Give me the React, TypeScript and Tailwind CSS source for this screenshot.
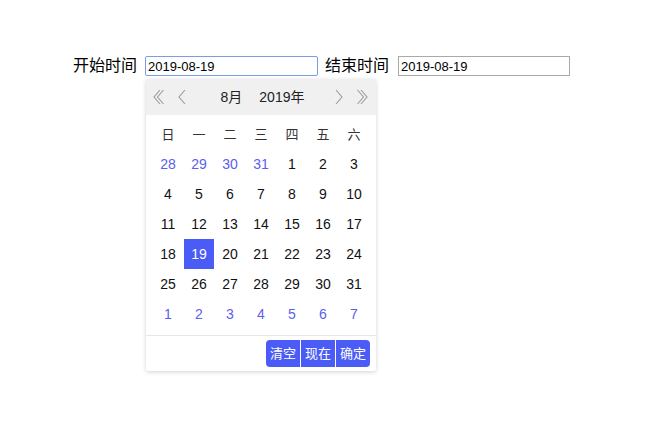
const weeks = ["日", "一", "二", "三", "四", "五", "六"];

type Day = { n: number; other?: boolean; sel?: boolean };

const days: Day[] = [
  ...[28, 29, 30, 31].map((n) => ({ n, other: true })),
  ...Array.from({ length: 31 }, (_, i) => ({ n: i + 1, sel: i + 1 === 19 })),
  ...[1, 2, 3, 4, 5, 6, 7].map((n) => ({ n, other: true })),
];

function Chevron({ double, right }: { double?: boolean; right?: boolean }) {
  const w = double ? 11 : 8;
  return (
    <svg width={w} height="16" viewBox={`0 0 ${w} 16`} className={right ? "-scale-x-100" : ""}>
      <polyline points="7,1 1,8 7,15" fill="none" stroke="#9a9a9a" strokeWidth="1.1" />
      {double && <polyline points="10.5,1 4.5,8 10.5,15" fill="none" stroke="#9a9a9a" strokeWidth="1.1" />}
    </svg>
  );
}

export default function App() {
  return (
    <div
      className="w-[650px] h-[424px] bg-white text-black"
      style={{ fontFamily: '"Liberation Sans", "Noto Sans CJK SC", sans-serif' }}
    >
      <div className="flex items-center pt-[56px] pl-[73px]">
        <span className="text-[16px] leading-[20px]">开始时间</span>
        <input
          readOnly
          value="2019-08-19"
          className="ml-[8px] w-[173px] h-[20px] border border-[#7a9ee6] rounded-[2px] px-[2px] text-[13px] outline-none"
        />
        <span className="ml-[7px] text-[16px] leading-[20px]">结束时间</span>
        <input
          readOnly
          value="2019-08-19"
          className="ml-[9px] w-[172px] h-[20px] border border-[#a9a9a9] px-[2px] text-[13px] outline-none"
        />
      </div>

      <div className="ml-[146px] mt-[3px] w-[230px] bg-white rounded-[2px] shadow-[0_1px_4px_rgba(0,0,0,0.18)] text-[14px]">
        <div className="flex items-center h-[36px] bg-[#f0f0f0] pl-[7px] pr-[8px]">
          <Chevron double />
          <span className="ml-[14px] flex">
            <Chevron />
          </span>
          <div className="flex-1 flex justify-center gap-[17px] text-[#222] pl-[4px]">
            <span>8月</span>
            <span>2019年</span>
          </div>
          <Chevron right />
          <span className="ml-[14px] flex">
            <Chevron double right />
          </span>
        </div>

        <div className="px-[6.5px] pt-[6px] pb-[6px]">
          <div className="grid grid-cols-7">
            {weeks.map((w) => (
              <div key={w} className="h-[28px] flex items-center justify-center text-[13px] text-[#333]">
                {w}
              </div>
            ))}
          </div>
          <div className="grid grid-cols-7">
            {days.map((d, i) => (
              <div key={i} className="h-[30px] flex items-center justify-center">
                <span
                  className={
                    d.sel
                      ? "w-[30px] h-[30px] flex items-center justify-center bg-[#4a5cf5] text-white"
                      : d.other
                      ? "text-[#5b5ef2]"
                      : "text-[#111]"
                  }
                >
                  {d.n}
                </span>
              </div>
            ))}
          </div>
        </div>

        <div className="border-t border-[#e6e6e6] flex justify-end px-[6px] pt-[4px] pb-[4px]">
          <div className="flex rounded-[4px] overflow-hidden gap-px bg-white">
            {["清空", "现在", "确定"].map((b) => (
              <span key={b} className="w-[34px] h-[27px] flex items-center justify-center bg-[#4a5cf5] text-white text-[13px]">
                {b}
              </span>
            ))}
          </div>
        </div>
      </div>
    </div>
  );
}
